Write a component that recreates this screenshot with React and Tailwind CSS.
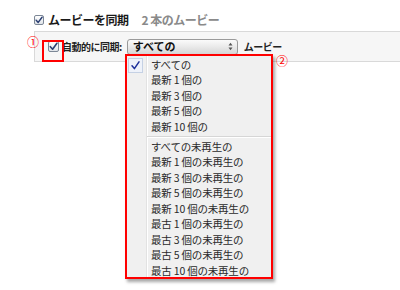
const jp = { fontFamily: '"Noto Sans CJK JP", "Liberation Sans", sans-serif' };

const groupA = ['すべての', '最新 1 個の', '最新 3 個の', '最新 5 個の', '最新 10 個の'];
const groupB = [
  'すべての未再生の',
  '最新 1 個の未再生の',
  '最新 3 個の未再生の',
  '最新 5 個の未再生の',
  '最新 10 個の未再生の',
  '最古 1 個の未再生の',
  '最古 3 個の未再生の',
  '最古 5 個の未再生の',
  '最古 10 個の未再生の',
];

const Check = ({ size = 10 }) => (
  <span
    className="inline-flex items-center justify-center rounded-[2px] border border-[#7c8796] bg-gradient-to-b from-[#ffffff] to-[#dfe3e8] shrink-0"
    style={{ width: size, height: size }}
  >
    <svg width={size - 2} height={size - 2} viewBox="0 0 10 10">
      <path d="M1.5 5.2 L4 8 L8.8 1.5" fill="none" stroke="#2b3f73" strokeWidth="1.8" strokeLinecap="round" strokeLinejoin="round" />
    </svg>
  </span>
);

const Item = ({ label, checked }) => (
  <div className="relative h-[15.5px] flex items-center pl-[24px] text-[10.5px] text-[#2a2a2a] leading-none tracking-[-0.2px]">
    {checked && (
      <span className="absolute left-[1px] top-[1px] w-[15px] h-[15px] border border-[#c5d1e4] bg-[#eef2fa] flex items-center justify-center">
        <svg width="11" height="11" viewBox="0 0 11 11">
          <path d="M2 5.8 L4.4 8.6 L9 1.8" fill="none" stroke="#1c2f9a" strokeWidth="1.5" strokeLinecap="round" strokeLinejoin="round" />
        </svg>
      </span>
    )}
    {label}
  </div>
);

export default function App() {
  return (
    <div className="relative w-[400px] h-[290px] bg-white overflow-hidden" style={jp}>
      <div className="flex items-center pl-[34px] pt-[13px] h-[27px] gap-[4px]">
        <Check size={10} />
        <span className="text-[12px] font-bold text-[#1a1a1a] leading-none tracking-[-0.5px]">ムービーを同期</span>
        <span className="text-[12px] font-bold text-[#8a8a8a] leading-none ml-[9px] tracking-[-0.5px]">2 本のムービー</span>
      </div>

      <div className="mt-[4px] ml-[34px] h-[31px] border-t border-b border-l border-[#d9d9d9] bg-[#f6f6f6] flex items-center pl-[13px]">
        <Check size={11} />
        <span className="ml-[3px] text-[10px] font-bold text-[#222] leading-none tracking-[-0.5px]">自動的に同期:</span>
        <div className="ml-[5px] w-[111px] h-[16px] rounded-[3px] border border-[#9a9a9a] bg-gradient-to-b from-[#fbfbfb] via-[#e9e9e9] to-[#d6d6d6] flex items-center pl-[5px] pr-[4px]">
          <span className="text-[11px] font-bold text-[#111] leading-none flex-1">すべての</span>
          <svg width="5" height="9" viewBox="0 0 5 9">
            <path d="M0.5 3.5 L2.5 0.8 L4.5 3.5 Z M0.5 5.5 L2.5 8.2 L4.5 5.5 Z" fill="#555" />
          </svg>
        </div>
        <span className="ml-[6px] text-[10px] font-bold text-[#222] leading-none tracking-[-0.5px]">ムービー</span>
      </div>

      {/* annotation 1 */}
      <span className="absolute left-[27px] top-[36px] text-[12px] leading-none text-[#f00]">①</span>
      <div className="absolute left-[42px] top-[40px] w-[22px] h-[22px] border-2 border-[#f00]" />

      {/* dropdown menu */}
      <div className="absolute left-[125px] top-[54px] w-[148px] h-[225px] border-2 border-[#f00] bg-[#f0f0f0] shadow-[2px_3px_3px_rgba(0,0,0,0.35)]">
        <div className="absolute left-[19px] top-0 bottom-0 w-px bg-[#e2e2e2]" />
        <div className="absolute left-[20px] top-0 bottom-0 w-px bg-white" />
        <div className="relative pt-[1px]">
          {groupA.map((t, i) => (
            <Item key={t} label={t} checked={i === 0} />
          ))}
          <div className="h-[4.5px] flex flex-col justify-center pl-[20px]">
            <div className="h-px bg-[#d6d6d6]" />
            <div className="h-px bg-white" />
          </div>
          {groupB.map((t) => (
            <Item key={t} label={t} />
          ))}
        </div>
      </div>
      <span className="absolute left-[276px] top-[55px] text-[12px] leading-none text-[#f00]">②</span>
    </div>
  );
}
